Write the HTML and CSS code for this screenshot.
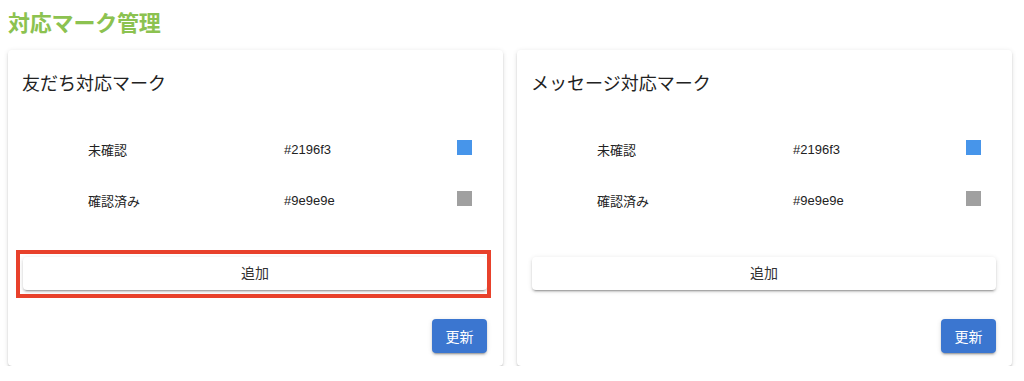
FILE: index.html
```html
<!DOCTYPE html>
<html lang="ja">
<head>
<meta charset="utf-8">
<title>対応マーク管理</title>
<link rel="stylesheet" href="styles.css">
</head>
<body>
<div class="page">
  <h1 class="page-title">対応マーク管理</h1>
  <div class="cards">
    <section class="card">
      <h2 class="card-title">友だち対応マーク</h2>
      <div class="rows">
        <div class="row"><span class="label">未確認</span><span class="hex">#2196f3</span><span class="swatch swatch-blue"></span></div>
        <div class="row"><span class="label">確認済み</span><span class="hex">#9e9e9e</span><span class="swatch swatch-grey"></span></div>
      </div>
      <div class="add-wrap">
        <button class="add-btn">追加</button>
        <span class="highlight"></span>
      </div>
      <div class="actions"><button class="update-btn">更新</button></div>
    </section>
    <section class="card">
      <h2 class="card-title">メッセージ対応マーク</h2>
      <div class="rows">
        <div class="row"><span class="label">未確認</span><span class="hex">#2196f3</span><span class="swatch swatch-blue"></span></div>
        <div class="row"><span class="label">確認済み</span><span class="hex">#9e9e9e</span><span class="swatch swatch-grey"></span></div>
      </div>
      <div class="add-wrap">
        <button class="add-btn">追加</button>
      </div>
      <div class="actions"><button class="update-btn">更新</button></div>
    </section>
  </div>
</div>
</body>
</html>
```

FILE: styles.css
```css
html, body {
  margin: 0;
  padding: 0;
  background: #ffffff;
}

body {
  font-family: "Noto Sans CJK JP", "Noto Sans", sans-serif;
  color: #222222;
}

.page {
  padding: 8px 12px 0 8px;
}

.page-title {
  margin: 0 0 16px 0;
  font-size: 22px;
  line-height: 26px;
  font-weight: 700;
  color: #8cc250;
  letter-spacing: -0.2px;
}

.cards {
  display: grid;
  grid-template-columns: 1fr 1fr;
  column-gap: 14px;
}

.card {
  background: #fff;
  border-radius: 4px;
  box-shadow: 0 3px 1px -2px rgba(0,0,0,.2), 0 2px 2px 0 rgba(0,0,0,.14), 0 1px 5px 0 rgba(0,0,0,.12);
  padding: 20px 16px 13px 15px;
  display: flex;
  flex-direction: column;
}

.card-title {
  margin: 0 0 0 -1px;
  font-size: 18px;
  line-height: 24px;
  font-weight: 400;
  color: #222;
}

.rows {
  margin-top: 28px;
  padding-left: 65px;
}

.row {
  display: grid;
  grid-template-columns: 196px 173px 15px;
  align-items: center;
  height: 51px;
  font-size: 13px;
  color: #222;
}

.label, .hex {
  position: relative;
  top: 2px;
}

.hex {
  font-family: "Liberation Sans", Arial, sans-serif;
  font-size: 13px;
}

.swatch {
  display: block;
  width: 15px;
  height: 15px;
}

.swatch-blue { background: #4795ea; }
.swatch-grey { background: #a0a0a0; }

.add-wrap {
  position: relative;
  margin-top: 33px;
}

.add-btn {
  display: block;
  width: 100%;
  height: 33px;
  border: none;
  border-radius: 4px;
  background: #fff;
  font-family: "Noto Sans CJK JP", sans-serif;
  font-size: 14px;
  line-height: 31px;
  color: #333;
  box-shadow: 0 3px 1px -2px rgba(0,0,0,.2), 0 2px 2px 0 rgba(0,0,0,.14), 0 1px 5px 0 rgba(0,0,0,.12);
  padding: 0 0 2px 0;
}

.highlight {
  position: absolute;
  left: -7px;
  right: -4px;
  top: -7px;
  bottom: -8px;
  border: 4px solid #e8412b;
  pointer-events: none;
}

.actions {
  display: flex;
  justify-content: flex-end;
  margin-top: 29px;
}

.update-btn {
  width: 55px;
  height: 34px;
  border: none;
  border-radius: 4px;
  background: #3b76d0;
  color: #fff;
  font-family: "Noto Sans CJK JP", sans-serif;
  font-size: 14px;
  padding: 0;
  box-shadow: 0 3px 1px -2px rgba(0,0,0,.2), 0 2px 2px 0 rgba(0,0,0,.14), 0 1px 5px 0 rgba(0,0,0,.12);
}
```
